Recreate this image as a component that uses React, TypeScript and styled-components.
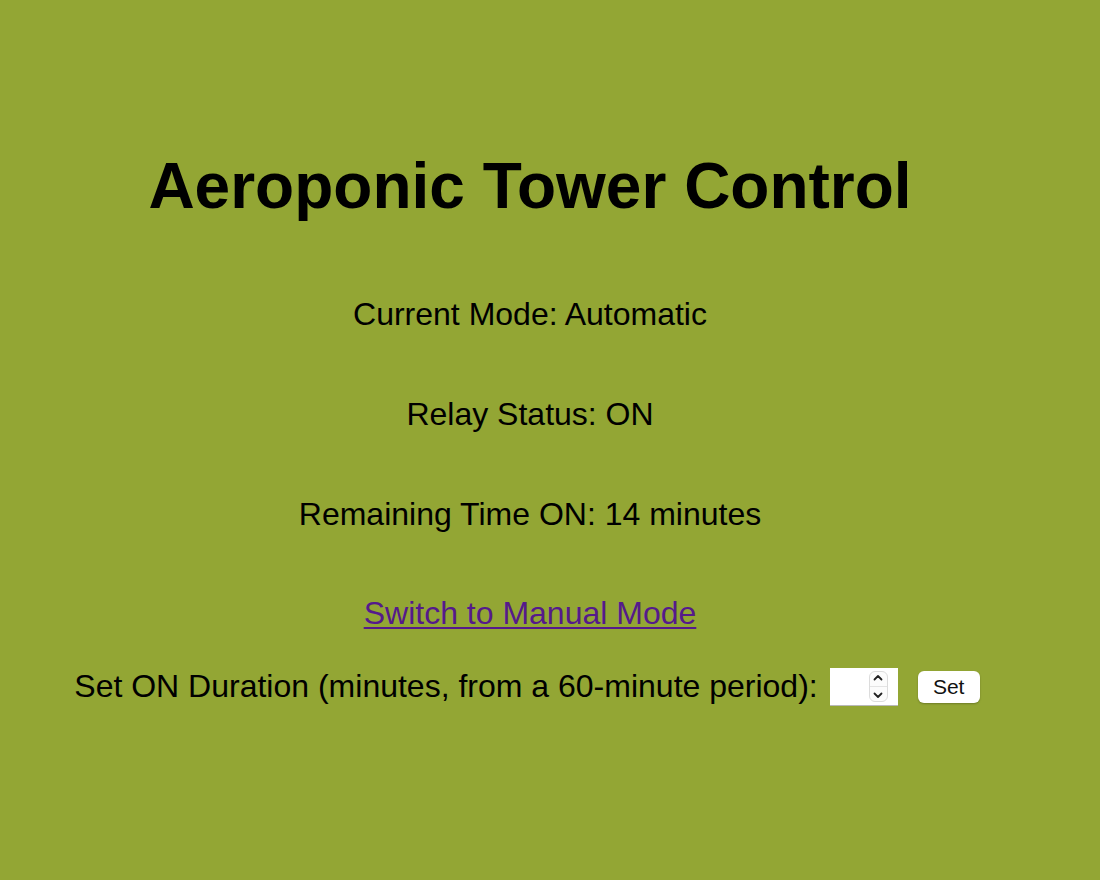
import React from "react";
import styled, { createGlobalStyle } from "styled-components";

const GlobalStyle = createGlobalStyle`
  html, body {
    margin: 0;
    padding: 0;
    background: #93a634;
  }
  body {
    font-family: "Liberation Sans", Arial, Helvetica, sans-serif;
    color: #000;
  }
`;

const Page = styled.main`
  width: 1060px;
  min-height: 880px;
  box-sizing: border-box;
  padding-top: 149px;
  display: flex;
  flex-direction: column;
  align-items: center;
  text-align: center;
`;

const Title = styled.h1`
  margin: 0 0 73px;
  font-size: 64px;
  line-height: 74px;
  font-weight: 700;
`;

const StatusLine = styled.p<{ $gap?: number }>`
  margin: 0 0 ${(p) => p.$gap ?? 64}px;
  font-size: 32px;
  line-height: 36px;
`;

const ModeLink = styled.a`
  color: #551a8b;
  text-decoration: underline;
  text-underline-offset: 3px;
  text-decoration-thickness: 2px;
  cursor: pointer;
`;

const FormRow = styled.form`
  display: flex;
  align-items: center;
  justify-content: center;
  font-size: 32px;
  line-height: 36px;
  margin-left: -6px;
`;

const Label = styled.label`
  margin-right: 12px;
  margin-top: -2px;
`;

const NumberBox = styled.div`
  width: 68px;
  height: 38px;
  box-sizing: border-box;
  background: #fff;
  border-bottom: 1px solid #b9b9b9;
  display: flex;
  align-items: center;
  justify-content: flex-end;
  padding-right: 10px;
  margin-right: 20px;
`;

const NumberInput = styled.input`
  width: 28px;
  border: none;
  outline: none;
  background: transparent;
  font-size: 20px;
  padding: 0;
`;

const Spinner = styled.div`
  width: 19px;
  height: 31px;
  box-sizing: border-box;
  border: 1px solid #dcdcdc;
  border-radius: 6px;
  display: flex;
  flex-direction: column;
  align-items: center;
  justify-content: space-around;
  background: #fcfcfc;
`;

const SpinDivider = styled.div`
  width: 100%;
  height: 1px;
  background: #e4e4e4;
`;

const SetButton = styled.button`
  width: 62px;
  height: 32px;
  border: none;
  border-radius: 6px;
  background: #fff;
  box-shadow: 0 1px 2px rgba(0, 0, 0, 0.25);
  font-family: "Liberation Sans", Arial, Helvetica, sans-serif;
  font-size: 21px;
  color: #111;
  padding: 0;
  cursor: pointer;
`;

const Chevron = ({ up }: { up?: boolean }) => (
  <svg width="10" height="7" viewBox="0 0 10 7">
    <path
      d={up ? "M1.5 5.5 L5 2 L8.5 5.5" : "M1.5 1.5 L5 5 L8.5 1.5"}
      fill="none"
      stroke="#222"
      strokeWidth="1.8"
      strokeLinecap="round"
      strokeLinejoin="round"
    />
  </svg>
);

export default function App() {
  return (
    <>
      <GlobalStyle />
      <Page>
        <Title>Aeroponic Tower Control</Title>
        <StatusLine>Current Mode: Automatic</StatusLine>
        <StatusLine>Relay Status: ON</StatusLine>
        <StatusLine $gap={63}>Remaining Time ON: 14 minutes</StatusLine>
        <StatusLine $gap={37}>
          <ModeLink href="#manual">Switch to Manual Mode</ModeLink>
        </StatusLine>
        <FormRow onSubmit={(e) => e.preventDefault()}>
          <Label htmlFor="dur">Set ON Duration (minutes, from a 60-minute period):</Label>
          <NumberBox>
            <NumberInput id="dur" type="text" />
            <Spinner>
              <Chevron up />
              <SpinDivider />
              <Chevron />
            </Spinner>
          </NumberBox>
          <SetButton type="submit">Set</SetButton>
        </FormRow>
      </Page>
    </>
  );
}
